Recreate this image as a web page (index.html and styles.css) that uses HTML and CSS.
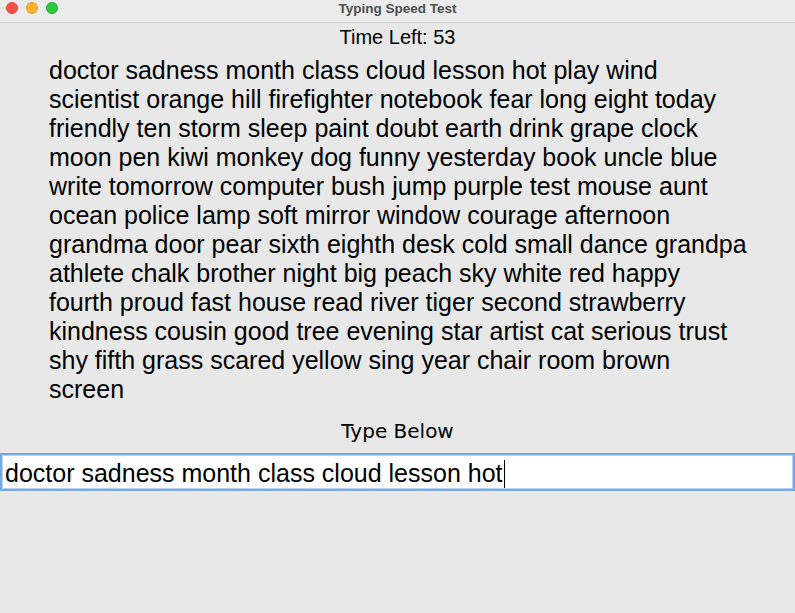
FILE: index.html
```html
<!DOCTYPE html>
<html>
<head>
<meta charset="utf-8">
<link rel="stylesheet" href="styles.css">
</head>
<body>
<div class="window">
  <div class="titlebar">
    <div class="lights">
      <span class="light red"></span>
      <span class="light yellow"></span>
      <span class="light green"></span>
    </div>
    <div class="title">Typing Speed Test</div>
  </div>
  <div class="content">
    <div class="timer">Time Left: 53</div>
    <div class="words">doctor sadness month class cloud lesson hot play wind<br>scientist orange hill firefighter notebook fear long eight today<br>friendly ten storm sleep paint doubt earth drink grape clock<br>moon pen kiwi monkey dog funny yesterday book uncle blue<br>write tomorrow computer bush jump purple test mouse aunt<br>ocean police lamp soft mirror window courage afternoon<br>grandma door pear sixth eighth desk cold small dance grandpa<br>athlete chalk brother night big peach sky white red happy<br>fourth proud fast house read river tiger second strawberry<br>kindness cousin good tree evening star artist cat serious trust<br>shy fifth grass scared yellow sing year chair room brown<br>screen</div>
    <div class="prompt">Type Below</div>
    <div class="entry"><span class="typed">doctor sadness month class cloud lesson hot</span><span class="caret"></span></div>
  </div>
</div>
</body>
</html>
```
FILE: styles.css
```css
* { box-sizing: border-box; }
html, body { margin: 0; padding: 0; }
body {
  width: 795px;
  height: 613px;
  background: #e8e8e8;
  font-family: "Liberation Sans", Arial, sans-serif;
  overflow: hidden;
}
.window { display: flex; flex-direction: column; height: 613px; }
.titlebar {
  height: 23px;
  background: #ebebeb;
  border-bottom: 1px solid #c9c9c9;
  display: flex;
  align-items: center;
  justify-content: center;
  position: relative;
}
.lights {
  position: absolute;
  left: 6px;
  top: 2px;
  display: flex;
  gap: 8px;
}
.light {
  width: 12px;
  height: 12px;
  border-radius: 50%;
  display: block;
}
.red { background: #fe4f48; border: 0.5px solid #e0443e; }
.yellow { background: #fdb12e; border: 0.5px solid #dea123; }
.green { background: #2ac940; border: 0.5px solid #1aab29; }
.title {
  font-size: 13.5px;
  font-weight: bold;
  color: #4e4e4e;
  margin-top: -5px;
}
.content {
  display: flex;
  flex-direction: column;
  background: #e8e8e8;
  flex: 1;
}
.timer {
  text-align: center;
  font-size: 20px;
  line-height: 26px;
  margin-top: 1px;
  color: #000;
}
.words {
  margin-left: 49px;
  white-space: nowrap;
  font-size: 25px;
  line-height: 29px;
  margin-top: 6px;
  color: #000;
}
.prompt {
  text-align: center;
  font-family: "DejaVu Sans", Verdana, sans-serif;
  font-size: 20px;
  line-height: 24px;
  margin-top: 15px;
  color: #000;
}
.entry {
  margin-top: 10px;
  height: 38px;
  background: #fff;
  border: 2px solid #79a7df;
  box-shadow: inset 0 0 0 1px #b9d2f1;
  display: flex;
  align-items: center;
  padding-left: 3px;
  padding-top: 3px;
  font-size: 25px;
  color: #000;
}
.caret {
  display: inline-block;
  width: 1px;
  height: 28px;
  background: #000;
  margin-left: 1px;
}
```
